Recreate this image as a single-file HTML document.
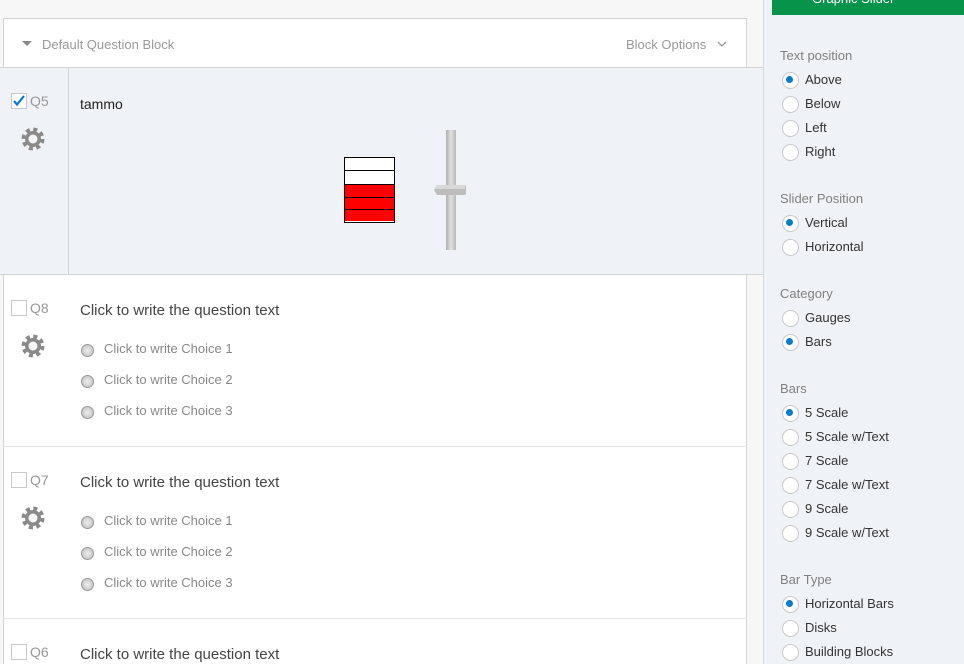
<!DOCTYPE html>
<html style="width:964px;height:664px;overflow:hidden"><head><meta charset="utf-8"><style>
*{margin:0;padding:0;box-sizing:border-box}
body{width:964px;height:664px;overflow:hidden;background:#f7f7f7;font-family:"Liberation Sans",sans-serif;position:relative}
.a{position:absolute}
.blk{left:3px;top:18px;width:744px;height:646px;background:#fff;border:1px solid #d3d3d3;border-bottom:none}
.side{left:763px;top:0;width:201px;height:664px;background:#eff2f6;border-left:1px solid #d6d9dc}
.green{left:772px;top:0;width:192px;height:15px;background:#07944a;color:#fff;font-size:13px;padding-left:40px;overflow:hidden}
.h{font-size:13px;color:#808080}
.r{font-size:13px;color:#333;padding-left:23px;height:24px;line-height:16px}
.r:before{content:"";position:absolute;left:0;top:0;width:15px;height:15px;border:1px solid #c9c9c9;border-radius:50%;background:#fff}
.r.on:after{content:"";position:absolute;left:4px;top:4px;width:7px;height:7px;border-radius:50%;background:#0a7bc8}
.qt{font-size:15px;color:#444}
.ch{font-size:13px;color:#888;padding-left:23px}
.ch:before{content:"";position:absolute;left:0;top:3px;width:11px;height:11px;border:1px solid #999;border-radius:50%;background:radial-gradient(#eee,#bbb)}
.cb{width:16px;height:16px;border:1px solid #c8c8c8;background:#fff}
.ql{font-size:14px;color:#999}
.sep{left:3px;width:744px;height:1px;background:#e6e6e6}
</style></head><body>
<div class="a blk"></div>
<div class="a" style="left:22px;top:41px;width:0;height:0;border-left:5px solid transparent;border-right:5px solid transparent;border-top:5px solid #888"></div>
<div class="a" style="left:42px;top:37px;font-size:13px;color:#999">Default Question Block</div>
<div class="a" style="left:626px;top:37px;font-size:13px;color:#999">Block Options</div>
<svg class="a" style="left:717px;top:41px" width="10" height="6"><path d="M1 1L5 5L9 1" fill="none" stroke="#999" stroke-width="1.3"/></svg>
<div class="a" style="left:0;top:67px;width:763px;height:208px;background:#eff2f6;border-top:1px solid #d3d3d3;border-bottom:1px solid #d3d3d3"></div>
<div class="a" style="left:68px;top:68px;width:1px;height:206px;background:#d3d3d3"></div>
<div class="a cb" style="left:11px;top:93px"></div>
<svg class="a" style="left:11px;top:93px" width="16" height="16"><path d="M3 8L6 11.5L13 3" fill="none" stroke="#0a7bc8" stroke-width="2.2"/></svg>
<div class="a ql" style="left:30px;top:93px">Q5</div>
<div class="a" style="left:80px;top:96px;font-size:14px;color:#222">tammo</div>
<div class="a" style="left:344px;top:157px;width:51px;height:66px;border:1px solid #000;background:#fff">
<div style="height:13px;border-bottom:1px solid #000"></div>
<div style="height:14px;border-bottom:1px solid #000"></div>
<div style="height:13px;background:red;border-bottom:1px solid #000"></div>
<div style="height:12px;background:red;border-bottom:1px solid #000"></div>
<div style="height:11px;background:red"></div></div>
<div class="a" style="left:446px;top:130px;width:10px;height:120px;background:linear-gradient(90deg,#b0b0b0,#e0e0e0,#b8b8b8)"></div>
<svg class="a" style="left:433px;top:184px" width="34" height="12"><path d="M4 1H32Q33 1 33 3V9Q33 11 31 11H4L1 6Z" fill="#bdbdbd"/><path d="M4 1H32V5H2Z" fill="#d8d8d8"/></svg>

<div class="a cb" style="left:11px;top:300px"></div><div class="a ql" style="left:30px;top:300px">Q8</div>
<div class="a qt" style="left:80px;top:302px">Click to write the question text</div>
<div class="a ch" style="left:81px;top:341px">Click to write Choice 1</div>
<div class="a ch" style="left:81px;top:372px">Click to write Choice 2</div>
<div class="a ch" style="left:81px;top:403px">Click to write Choice 3</div>
<div class="a sep" style="top:446px"></div>
<div class="a cb" style="left:11px;top:472px"></div><div class="a ql" style="left:30px;top:472px">Q7</div>
<div class="a qt" style="left:80px;top:474px">Click to write the question text</div>
<div class="a ch" style="left:81px;top:513px">Click to write Choice 1</div>
<div class="a ch" style="left:81px;top:544px">Click to write Choice 2</div>
<div class="a ch" style="left:81px;top:575px">Click to write Choice 3</div>
<div class="a sep" style="top:618px"></div>
<div class="a cb" style="left:11px;top:644px"></div><div class="a ql" style="left:30px;top:644px">Q6</div>
<div class="a qt" style="left:80px;top:646px">Click to write the question text</div>

<svg class="a" style="left:0;top:0" width="70" height="664">
<defs><g id="g"><circle r="8" fill="#8a8a8a"/><circle r="9.5" fill="none" stroke="#8a8a8a" stroke-width="4" stroke-dasharray="4 3.46"/><circle r="4.5" fill="#f4f5f7"/></g></defs>
<use href="#g" x="33" y="139"/><use href="#g" x="33" y="346"/><use href="#g" x="33" y="518"/>
</svg>

<div class="a side"></div>
<div class="a green"><span style="position:relative;top:-9px">Graphic Slider</span></div>
<div class="a h" style="left:780px;top:48px">Text position</div>
<div class="a r on" style="left:782px;top:72px">Above</div>
<div class="a r" style="left:782px;top:96px">Below</div>
<div class="a r" style="left:782px;top:120px">Left</div>
<div class="a r" style="left:782px;top:144px">Right</div>
<div class="a h" style="left:780px;top:191px">Slider Position</div>
<div class="a r on" style="left:782px;top:215px">Vertical</div>
<div class="a r" style="left:782px;top:239px">Horizontal</div>
<div class="a h" style="left:780px;top:286px">Category</div>
<div class="a r" style="left:782px;top:310px">Gauges</div>
<div class="a r on" style="left:782px;top:334px">Bars</div>
<div class="a h" style="left:780px;top:381px">Bars</div>
<div class="a r on" style="left:782px;top:405px">5 Scale</div>
<div class="a r" style="left:782px;top:429px">5 Scale w/Text</div>
<div class="a r" style="left:782px;top:453px">7 Scale</div>
<div class="a r" style="left:782px;top:477px">7 Scale w/Text</div>
<div class="a r" style="left:782px;top:501px">9 Scale</div>
<div class="a r" style="left:782px;top:525px">9 Scale w/Text</div>
<div class="a h" style="left:780px;top:572px">Bar Type</div>
<div class="a r on" style="left:782px;top:596px">Horizontal Bars</div>
<div class="a r" style="left:782px;top:620px">Disks</div>
<div class="a r" style="left:782px;top:644px">Building Blocks</div>
</body></html>
